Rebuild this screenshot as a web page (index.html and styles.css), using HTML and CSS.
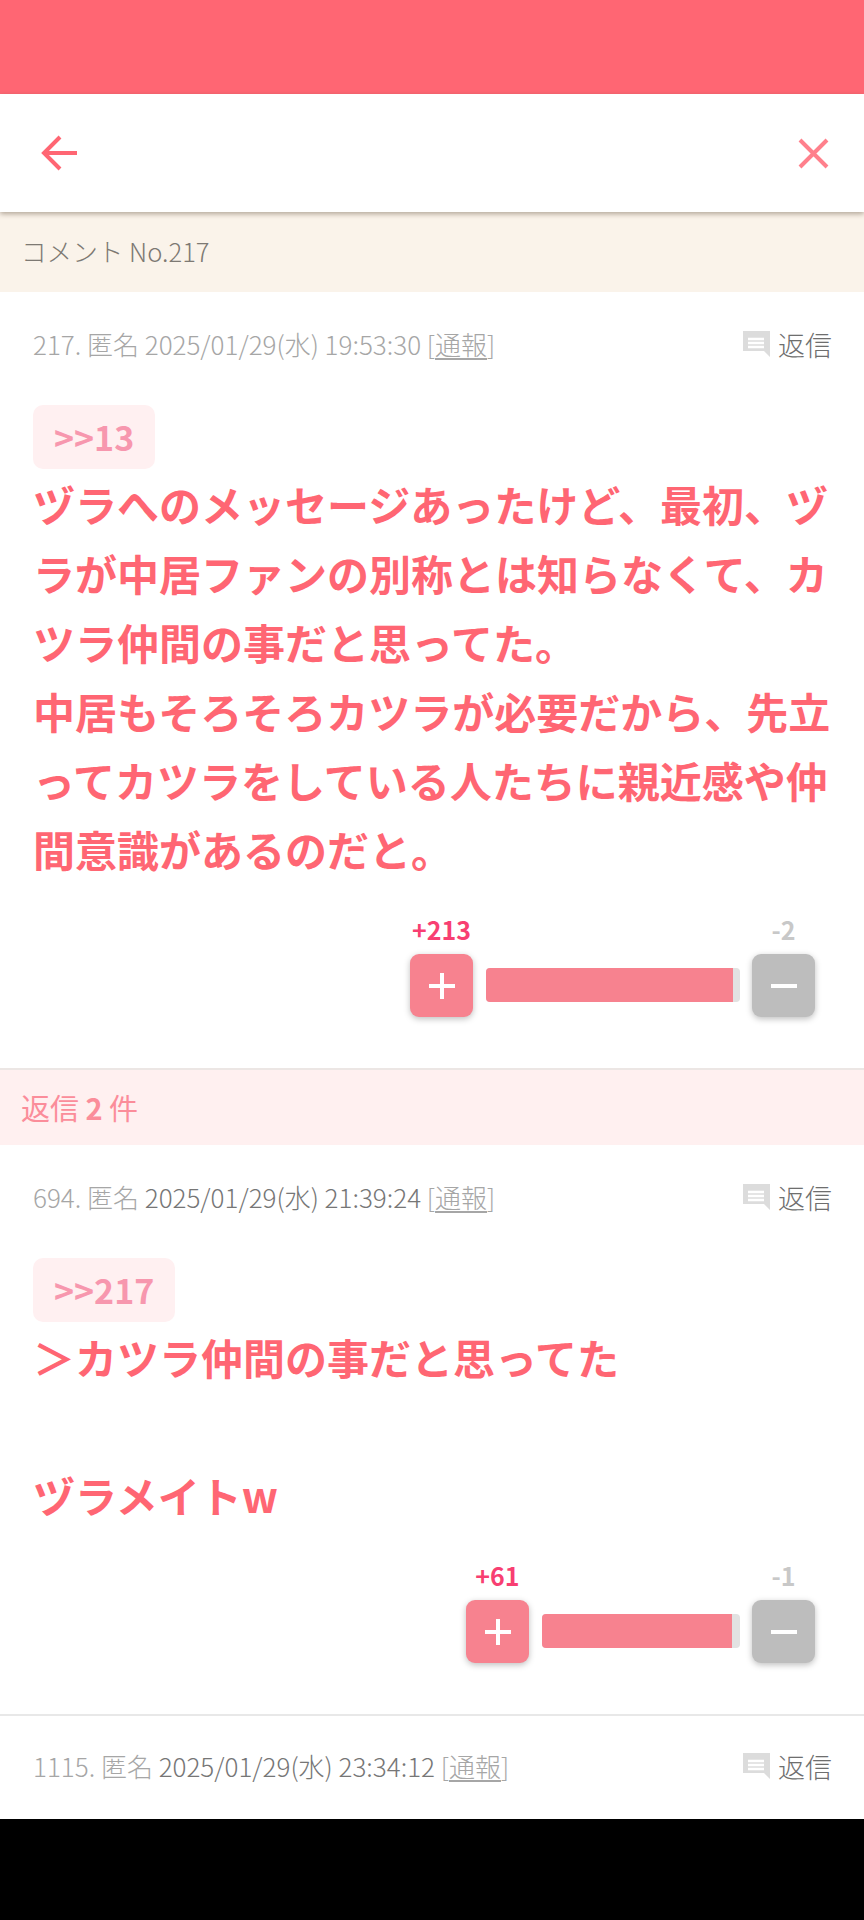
FILE: index.html
```html
<!DOCTYPE html>
<html lang="ja">
<head>
  <meta charset="UTF-8" />
  <title>コメント No.217</title>
  <link rel="stylesheet" href="styles.css">
</head>
<body>
  <div class="status-bar"></div>
  <header class="top-nav">
    <svg class="nav-back" width="37" height="36" viewBox="0 0 37 36"><path d="M19 2 3 18l16 16M3 18h33" /></svg>
    <svg class="nav-close" width="31" height="31" viewBox="0 0 31 31"><path d="M2 2l27 27M29 2 2 29" /></svg>
  </header>
  <div class="crumb">コメント No.217</div>

  <section class="comment">
    <div class="meta">
      <span class="meta-text"><span class="faint">217. 匿名 2025/01/29(水) 19:53:30</span> <span class="faint">[<u>通報</u>]</span></span>
      <span class="reply">
        <svg class="reply-icon" width="27" height="26" viewBox="0 0 27 26"><path class="bubble" d="M0 0h27v26l-6-6H0z" /><path class="lines" d="M5 8h16M5 12h16M5 16h16" /></svg>
        返信
      </span>
    </div>
    <div class="quote">&gt;&gt;13</div>
    <p class="body">ヅラへのメッセージあったけど、最初、ヅラが中居ファンの別称とは知らなくて、カツラ仲間の事だと思ってた。<br>中居もそろそろカツラが必要だから、先立ってカツラをしている人たちに親近感や仲間意識があるのだと。</p>
    <div class="votes">
      <div class="vote-col">
        <span class="count plus">+213</span>
        <button class="vote-btn btn-plus"><svg width="26" height="26" viewBox="0 0 26 26"><path d="M13 0v26M0 13h26" /></svg></button>
      </div>
      <div class="bar bar-wide"><div class="bar-fill" style="width: 97.2%"></div></div>
      <div class="vote-col">
        <span class="count minus">-2</span>
        <button class="vote-btn btn-minus"><svg width="26" height="26" viewBox="0 0 26 26"><path d="M0 13h26" /></svg></button>
      </div>
    </div>
  </section>

  <div class="reply-count">返信 <b>2</b> 件</div>

  <section class="comment">
    <div class="meta">
      <span class="meta-text"><span class="faint">694. 匿名</span> 2025/01/29(水) 21:39:24 <span class="faint">[<u>通報</u>]</span></span>
      <span class="reply">
        <svg class="reply-icon" width="27" height="26" viewBox="0 0 27 26"><path class="bubble" d="M0 0h27v26l-6-6H0z" /><path class="lines" d="M5 8h16M5 12h16M5 16h16" /></svg>
        返信
      </span>
    </div>
    <div class="quote">&gt;&gt;217</div>
    <p class="body">＞カツラ仲間の事だと思ってた<br><br>ヅラメイトw</p>
    <div class="votes">
      <div class="vote-col">
        <span class="count plus">+61</span>
        <button class="vote-btn btn-plus"><svg width="26" height="26" viewBox="0 0 26 26"><path d="M13 0v26M0 13h26" /></svg></button>
      </div>
      <div class="bar bar-narrow"><div class="bar-fill" style="width: 96%"></div></div>
      <div class="vote-col">
        <span class="count minus">-1</span>
        <button class="vote-btn btn-minus"><svg width="26" height="26" viewBox="0 0 26 26"><path d="M0 13h26" /></svg></button>
      </div>
    </div>
  </section>

  <section class="comment comment-last">
    <div class="meta">
      <span class="meta-text"><span class="faint">1115. 匿名</span> 2025/01/29(水) 23:34:12 <span class="faint">[<u>通報</u>]</span></span>
      <span class="reply">
        <svg class="reply-icon" width="27" height="26" viewBox="0 0 27 26"><path class="bubble" d="M0 0h27v26l-6-6H0z" /><path class="lines" d="M5 8h16M5 12h16M5 16h16" /></svg>
        返信
      </span>
    </div>
  </section>

  <div class="nav-black"></div>
</body>
</html>
```

FILE: styles.css
```css
* {
  box-sizing: border-box;
}
html, body {
  margin: 0;
  padding: 0;
}
body {
  width: 864px;
  height: 1920px;
  overflow: hidden;
  background: #fff;
  font-family: "Noto Sans CJK JP", "Noto Sans", sans-serif;
  display: flex;
  flex-direction: column;
}
body > * {
  flex-shrink: 0;
}
.status-bar {
  height: 94px;
  background: #ff6673;
}
.top-nav {
  position: relative;
  z-index: 1;
  height: 118px;
  background: #fff;
  box-shadow: 0 2px 5px rgba(90,70,50,0.45);
  display: flex;
  justify-content: space-between;
  align-items: center;
  padding: 0 35px 0 41px;
}
.top-nav svg {
  fill: none;
  stroke-width: 4;
}
.nav-back {
  stroke: #ff6673;
}
.nav-close {
  stroke: #ff808c;
}
.crumb {
  height: 80px;
  background: #faf3ea;
  color: #7d7973;
  font-size: 25.6px;
  font-weight: 300;
  line-height: 78px;
  padding-left: 21px;
}
.comment {
  padding: 32px 32px 51px 33px;
}
.meta {
  display: flex;
  justify-content: space-between;
  align-items: center;
  height: 42px;
  color: #767676;
  font-size: 26px;
  font-weight: 300;
}
.meta-text {
  padding-bottom: 3px;
}
.faint {
  color: #a6a6a6;
}
.meta-text u {
  text-underline-offset: 3px;
}
.reply {
  display: flex;
  align-items: center;
  gap: 8px;
  font-size: 27px;
  color: #6e6e6e;
  margin-top: -2px;
}
.reply-icon .bubble {
  fill: #dcdcdc;
}
.reply-icon .lines {
  stroke: #fff;
  stroke-width: 2.5;
  fill: none;
}
.quote {
  display: inline-block;
  margin-top: 39px;
  height: 64px;
  padding: 0 21px;
  background: #fff0f1;
  border-radius: 10px;
  color: #f797ae;
  font-size: 34px;
  font-weight: 700;
  line-height: 64px;
}
.body {
  margin: 0;
  color: #ff6673;
  font-size: 42px;
  font-weight: 700;
  line-height: 69px;
}
.votes {
  display: flex;
  justify-content: flex-end;
  align-items: flex-end;
  gap: 12px;
  padding-right: 17px;
  margin-top: 28px;
}
.vote-col {
  width: 63px;
  display: flex;
  flex-direction: column;
  align-items: center;
  gap: 7px;
}
.count {
  font-size: 25px;
  font-weight: 700;
  line-height: 36px;
  white-space: nowrap;
}
.plus {
  color: #f83f72;
}
.minus {
  color: #c8c8c8;
}
.vote-btn {
  width: 63px;
  height: 63px;
  border: none;
  border-radius: 9px;
  padding: 0;
  display: flex;
  align-items: center;
  justify-content: center;
  box-shadow: 0 2px 6px rgba(0,0,0,0.25);
}
.vote-btn svg {
  stroke: #fff;
  stroke-width: 4;
  fill: none;
}
.btn-plus {
  background: #f7828f;
}
.btn-minus {
  background: #bdbdbd;
}
.bar {
  height: 34px;
  margin: 0 0 15px 1px;
  background: #e2e2e2;
  border-radius: 4px;
  overflow: hidden;
}
.bar-wide {
  width: 254px;
}
.bar-narrow {
  width: 198px;
}
.bar-fill {
  height: 100%;
  background: #f7828f;
}
.reply-count {
  height: 77px;
  background: #fff0f0;
  color: #fb8d9a;
  font-size: 29px;
  line-height: 75px;
  padding-left: 21px;
  border-top: 2px solid #ece6e4;
}
.reply-count b {
  font-weight: 700;
}
.comment-last {
  flex: 1;
  padding-top: 30px;
  padding-bottom: 0;
  border-top: 2px solid #e8e8e8;
}
.nav-black {
  height: 101px;
  background: #000;
}
```
